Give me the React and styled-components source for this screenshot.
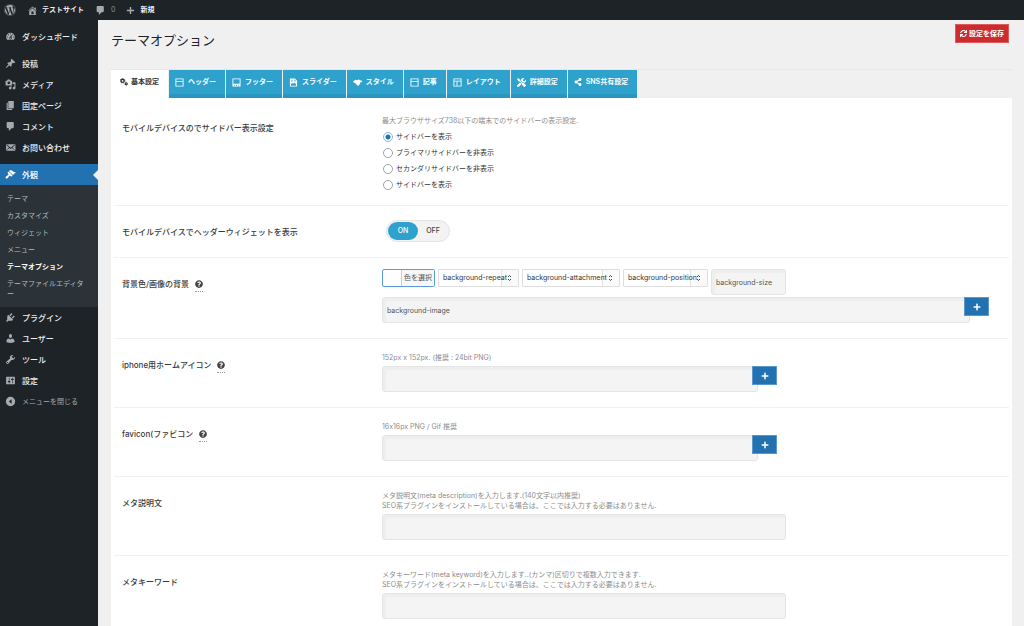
import React, { useState } from "react";
import styled, { createGlobalStyle, css } from "styled-components";
import { FaWordpress, FaSync, FaQuestionCircle, FaPlus, FaShareAlt, FaTools } from "react-icons/fa";

const GlobalStyle = createGlobalStyle`
  *, *::before, *::after { box-sizing: border-box; }
  body {
    margin: 0;
    background: #f0f0f0;
    color: #3c434a;
    font: 8px/10px Inter, "Noto Sans CJK JP", sans-serif;
    font-feature-settings: "calt" 0;
  }
  button, input, select { font: inherit; color: inherit; }
  ul { list-style: none; margin: 0; padding: 0; }
  a { color: inherit; text-decoration: none; }
  svg { display: block; flex: none; }
`;

const ICONS = {
  dashboard: "M3.76 16h12.48c1.1-1.37 1.76-3.11 1.76-5 0-4.42-3.58-8-8-8s-8 3.58-8 8c0 1.89.66 3.63 1.76 5zM10 4c.55 0 1 .45 1 1s-.45 1-1 1-1-.45-1-1 .45-1 1-1zM6 6c.55 0 1 .45 1 1s-.45 1-1 1-1-.45-1-1 .45-1 1-1zm8 0c.55 0 1 .45 1 1s-.45 1-1 1-1-.45-1-1 .45-1 1-1zm-5.37 5.55L12 7v6c0 1.1-.9 2-2 2s-2-.9-2-2c0-.57.24-1.08.63-1.45zM4 10c.55 0 1 .45 1 1s-.45 1-1 1-1-.45-1-1 .45-1 1-1zm12 0c.55 0 1 .45 1 1s-.45 1-1 1-1-.45-1-1 .45-1 1-1zm-5 3c0-.55-.45-1-1-1s-1 .45-1 1 .45 1 1 1 1-.45 1-1z",
  pin: "M10.44 3.02l1.82-1.82 6.36 6.35-1.83 1.82c-1.05-.68-2.48-.57-3.41.36l-.75.75c-.92.93-1.04 2.35-.35 3.41l-1.83 1.82-2.41-2.41-2.8 2.79c-.42.42-3.38 2.71-3.8 2.29s1.86-3.39 2.28-3.81l2.79-2.79L4.1 9.36l1.83-1.82c1.05.69 2.48.57 3.4-.36l.75-.75c.93-.92 1.05-2.35.36-3.41z",
  media: "M13 11V4c0-.55-.45-1-1-1h-1.67L9 1H5L3.67 3H2c-.55 0-1 .45-1 1v7c0 .55.45 1 1 1h10c.55 0 1-.45 1-1zM7 4.5c1.38 0 2.5 1.12 2.5 2.5S8.38 9.5 7 9.5 4.5 8.38 4.5 7 5.62 4.5 7 4.5zM14 6h5v10.5c0 1.38-1.12 2.5-2.5 2.5S14 17.88 14 16.5s1.12-2.5 2.5-2.5c.17 0 .34.02.5.05V9h-3V6zm-4 8.05V13h2v3.5c0 1.38-1.12 2.5-2.5 2.5S7 17.88 7 16.5 8.12 14 9.5 14c.17 0 .34.02.5.05z",
  page: "M6 15V2h10v13H6zm-1 1h8v2H3V5h2v11z",
  comment: "M5 2h9c1.1 0 2 .9 2 2v7c0 1.1-.9 2-2 2h-2l-5 5v-5H5c-1.1 0-2-.9-2-2V4c0-1.1.9-2 2-2z",
  email: "M19 14.5v-9c0-.83-.67-1.5-1.5-1.5H3.49c-.83 0-1.5.67-1.5 1.5v9c0 .83.67 1.5 1.5 1.5H17.5c.83 0 1.5-.67 1.5-1.5zm-1.31-9.11c.33.33.15.67-.03.84L13.6 9.95l3.9 4.06c.12.14.2.36.06.51-.13.16-.43.15-.56.05l-4.37-3.73-2.14 1.95-2.13-1.95-4.37 3.73c-.13.1-.43.11-.56-.05-.14-.15-.06-.37.06-.51l3.9-4.06-4.06-3.72c-.18-.17-.36-.51-.03-.84s.67-.17.95.07l6.24 5.04 6.25-5.04c.28-.24.62-.4.95-.07z",
  brush: "M14.48 11.06L7.41 3.99l1.5-1.5c.5-.56 2.3-.47 3.51.32 1.21.8 1.43 1.28 2.91 2.1 1.18.64 2.45 1.26 4.45.85zm-.71.71L6.7 4.7 4.93 6.47c-.39.39-.39 1.02 0 1.41l1.06 1.06c.39.39.39 1.03 0 1.42-.6.6-1.43 1.11-2.21 1.69-.35.26-.7.53-1.01.84C1.43 14.23.4 16.08 1.4 17.07c.99 1 2.84-.03 4.18-1.36.31-.31.58-.66.85-1.02.57-.78 1.08-1.61 1.69-2.21.39-.39 1.02-.39 1.41 0l1.06 1.06c.39.39 1.02.39 1.41 0z",
  plug: "M13.11 4.36L9.87 7.6 8 5.73l3.24-3.24c.35-.34 1.05-.2 1.56.32.52.51.66 1.21.31 1.55zm-8 1.77l.91-1.12 9.01 9.01-1.19.84c-.71.71-2.63 1.16-3.82 1.16H6.14L4.9 17.26c-.59.59-1.54.59-2.12 0-.59-.58-.59-1.53 0-2.12l1.24-1.24v-3.88c0-1.13.4-3.19 1.09-3.89zm7.26 3.97l3.24-3.24c.34-.35 1.04-.21 1.55.31.52.51.66 1.21.31 1.55l-3.24 3.25z",
  user: "M10 9.25c-2.27 0-2.73-3.44-2.73-3.44C7 4.02 7.82 2 9.97 2c2.16 0 2.98 2.02 2.71 3.81 0 0-.41 3.44-2.68 3.44zm0 2.57L12.72 10c2.39 0 4.52 2.33 4.52 4.53v2.49s-3.65 1.13-7.24 1.13c-3.65 0-7.24-1.13-7.24-1.13v-2.49c0-2.25 1.94-4.48 4.47-4.48z",
  wrench: "M16.68 9.77c-1.34 1.34-3.3 1.67-4.95.99l-5.41 6.52c-.99.99-2.59.99-3.58 0s-.99-2.59 0-3.57l6.52-5.42c-.68-1.65-.35-3.61.99-4.95 1.28-1.28 3.12-1.62 4.72-1.06l-2.89 2.89 2.82 2.82 2.86-2.87c.53 1.58.18 3.39-1.08 4.65zM3.81 16.21c.4.39 1.04.39 1.43 0 .4-.4.4-1.04 0-1.43-.39-.4-1.03-.4-1.43 0-.39.39-.39 1.03 0 1.43z",
  sliders: "M18 16V4c0-.55-.45-1-1-1H3c-.55 0-1 .45-1 1v12c0 .55.45 1 1 1h14c.55 0 1-.45 1-1zM8 11h1c.55 0 1 .45 1 1s-.45 1-1 1H8v1.5c0 .28-.22.5-.5.5s-.5-.22-.5-.5V13H6c-.55 0-1-.45-1-1s.45-1 1-1h1V5.5c0-.28.22-.5.5-.5s.5.22.5.5V11zm5-2h-1c-.55 0-1-.45-1-1s.45-1 1-1h1V5.5c0-.28.22-.5.5-.5s.5.22.5.5V7h1c.55 0 1 .45 1 1s-.45 1-1 1h-1v5.5c0 .28-.22.5-.5.5s-.5-.22-.5-.5V9z",
  collapse: "M10 1.5a8.5 8.5 0 1 0 0 17a8.5 8.5 0 1 0 0-17zM12 6v8l-5-4z",
  home: "M16 8.5l1.53 1.53-1.06 1.06L10 4.6l-6.47 6.49-1.06-1.06L10 2.5l4 4v-2h2v4zm-6-2.46l6 5.99V18H4v-5.97zM12 17v-5H8v5h4z",
  plus: "M8.4 2h3.2v6.4H18v3.2h-6.4V18H8.4v-6.4H2V8.4h6.4z",
  header: "M1 1h18v18H1zM3 3v3.500h14V3zM3 8.500v8.500h14v-8.500z",
  footer: "M1 1h18v18H1zM3 3v9.500h14V3zM5 15v2h2v-2zM9 15v2h2v-2zM13 15v2h2v-2z",
  slide: "M2 1h11l5 5v13H2zM4.500 13v4h11v-3l-3-4-3 3-2-2zM5 5v3h3V5zM12 3v4h4z",
  hand: "M0 8l5-4 5 1 3-2 2 2 5 1v3l-4 1-1 4-3 3-3-1-3-4-3-1z",
  layout: "M1 1h18v18H1zM3 3v3h14V3zM3 8v9h5V8zM10 8v9h7V8z",
};

function Icon({ name, size = 11 }) {
  return (
    <svg width={size} height={size} viewBox="0 0 20 20" fill="currentColor" aria-hidden="true">
      <path fillRule="evenodd" d={ICONS[name]} />
    </svg>
  );
}

function Gears() {
  return (
    <svg width="8" height="8" viewBox="0 0 20 20" fill="none" stroke="currentColor" aria-hidden="true">
      <circle cx="6.500" cy="7" r="4" strokeWidth="3.500" />
      <circle cx="6.500" cy="7" r="6" strokeWidth="1.500" strokeDasharray="2.400 2.312" />
      <circle cx="15.500" cy="14.500" r="2.500" strokeWidth="2.600" />
      <circle cx="15.500" cy="14.500" r="4" strokeWidth="1" strokeDasharray="2 2.189" />
    </svg>
  );
}

const Shell = styled.div`
  height: 100vh;
  display: flex;
  flex-direction: column;
  overflow: hidden;
`;

const AdminBar = styled.header`
  flex: none;
  height: 20px;
  background: #1d2327;
  color: #f0f0f1;
  display: flex;
  align-items: center;
  gap: 11px;
  padding: 0 4px;
`;

const BarLink = styled.a`
  display: flex;
  align-items: center;
  gap: ${(p) => p.$gap || 4}px;
  font-size: 7px;
  font-weight: 600;
  svg { color: #a7aaad; }
`;

const Count = styled.span`
  color: #8c8f94;
  font-weight: 400;
`;

const Columns = styled.div`
  flex: 1;
  min-height: 0;
  display: flex;
`;

const Sidebar = styled.nav`
  flex: none;
  width: 98px;
  padding-top: 6px;
  background: #1d2327;
  color: #f0f0f1;
`;

const MenuLink = styled.a`
  position: relative;
  display: flex;
  align-items: center;
  gap: 6px;
  height: 21px;
  padding-left: 5px;
  font-weight: 500;
  svg { color: #a7aaad; }
  ${(p) => p.$muted && css`
    color: #a7aaad;
    font-size: 7px;
    font-weight: 400;
  `}
  ${(p) => p.$current && css`
    background: #2271b1;
    color: #fff;
    svg { color: #fff; }
    &::after {
      content: "";
      position: absolute;
      right: 0;
      top: 6px;
      border: 5px solid transparent;
      border-left: 0;
      border-right-color: #f0f0f0;
    }
  `}
`;

const MenuGroup = styled.ul`
  margin-bottom: ${(p) => p.$gap || 0}px;
`;

const SubMenu = styled.ul`
  padding: 6px 10px 4px 7px;
  background: #2c3338;
`;

const SubLink = styled.a`
  display: block;
  padding: 3px 0 4px;
  font-size: 7px;
  color: ${(p) => (p.$active ? "#fff" : "#b4b9be")};
  font-weight: ${(p) => (p.$active ? 600 : 400)};
  line-break: anywhere;
`;

const Main = styled.main`
  flex: 1;
  min-width: 0;
  padding: 0 12px 0 13px;
  overflow: hidden;
`;

const TitleBar = styled.div`
  display: flex;
  justify-content: space-between;
  align-items: flex-start;
  height: 50px;
  padding: 4px 3px 0 0;
  border-bottom: 1px solid #e8e8e8;
`;

const Title = styled.h1`
  margin: 0;
  padding-top: 7px;
  font-size: 13px;
  line-height: 18px;
  font-weight: 400;
  color: #1d2327;
`;

const SaveButton = styled.button`
  display: flex;
  align-items: center;
  gap: 2px;
  height: 19px;
  padding: 0 4px;
  border: 1px solid #dc5a5a;
  background: #cd2c2e;
  color: #fff;
  font-size: 7px;
  font-weight: 600;
`;

const Tabs = styled.div`
  display: flex;
  gap: 1px;
`;

const Tab = styled.button`
  display: flex;
  align-items: center;
  gap: 4px;
  height: 28px;
  padding: 0 9px 0 6px;
  border: 0;
  border-bottom: 4px solid #2a95bf;
  background: #2ea2cc;
  color: #fff;
  font-size: 7px;
  font-weight: 600;
  white-space: nowrap;
  ${(p) => p.$active && css`
    gap: 3px;
    padding: 0 9px;
    background: #fff;
    border-color: #fff;
    color: #333;
  `}
`;

const Panel = styled.form`
  padding: 4px 3px 0;
  background: #fff;
`;

const Row = styled.div`
  display: grid;
  grid-template-columns: 260px minmax(0, 1fr);
  align-items: start;
  padding: 0 8px;
  & + & { border-top: 1px solid #f1f1f1; }
`;

const RowTitle = styled.div`
  display: flex;
  align-items: center;
  gap: 6px;
  height: 32px;
  padding-top: 20px;
  font-weight: 500;
  line-height: 12px;
  color: #3a3a3a;
`;

const Help = styled.button`
  display: flex;
  padding: 3px 0;
  border: 0;
  border-bottom: 1px dotted #999;
  background: none;
  color: #444;
`;

const Field = styled.div`
  display: flex;
  flex-direction: column;
  align-items: flex-start;
  gap: ${(p) => (p.$tight ? 2 : 3)}px;
  padding: ${(p) => (p.$tight ? 11 : 14)}px 0 15px;
`;

const Hint = styled.p`
  margin: 0;
  font-size: 7px;
  line-height: 10px;
  color: #8c8c8c;
`;

const Radios = styled.div`
  display: flex;
  flex-direction: column;
  margin: 0 0 -3px 1px;
`;

const RadioLabel = styled.label`
  display: flex;
  align-items: center;
  gap: 3px;
  height: 16px;
  font-size: 7px;
  color: #333;
`;

const Radio = styled.input`
  appearance: none;
  width: 10px;
  height: 10px;
  margin: 0;
  border: 1px solid #a0a3a8;
  border-radius: 50%;
  background: #fff;
  &:checked {
    border-color: #8fb4d8;
    background: radial-gradient(circle, #2271b1 2px, #fff 3px);
  }
`;

const Switch = styled.div`
  display: flex;
  margin-left: 4px;
  padding: 1px;
  border: 1px solid #e4e4e4;
  border-radius: 11px;
  background: #f3f3f3;
`;

const SwitchOption = styled.button`
  height: 18px;
  width: 30px;
  padding: 0;
  border: 0;
  border-radius: 9px;
  background: ${(p) => (p.$on ? "#2ea2cc" : "none")};
  color: ${(p) => (p.$on ? "#fff" : "#444")};
  font-size: 7px;
  font-weight: 500;
`;

const Controls = styled.div`
  display: flex;
  align-items: flex-start;
  gap: 3px;
`;

const ColorButton = styled.button`
  display: flex;
  height: 18px;
  padding: 0 0 0 18px;
  border: 1px solid #5b9dd9;
  border-radius: 2px;
  background: #fff;
  font-size: 7px;
`;

const ColorText = styled.span`
  padding: 0 2px;
  line-height: 16px;
  border-left: 1px solid #ccc;
  background: #f7f7f7;
  color: #555;
`;

const SelectBox = styled.div`
  position: relative;
  width: ${(p) => p.$w}px;
  height: 18px;
`;

const Select = styled.select`
  appearance: none;
  width: 100%;
  height: 18px;
  padding: 0 0 0 4px;
  border: 1px solid #dedede;
  border-radius: 1px;
  background: linear-gradient(to left, #fafafa 16px, #e2e2e2 16px, #e2e2e2 17px, #fff 17px);
  color: #32373c;
  font-size: 7px;
  line-height: 16px;
`;

const Arrows = styled.svg`
  position: absolute;
  right: 7px;
  top: 6px;
  pointer-events: none;
`;

const TextInput = styled.input`
  width: ${(p) => p.$w || "404px"};
  height: 26px;
  padding: 0 4px;
  border: 1px solid #e4e4e4;
  border-radius: 3px;
  background: #f4f4f4;
  box-shadow: inset 3px 3px 0 #eeeeee;
  font-size: 7px;
  &::placeholder { color: #555; opacity: 1; }
`;

const Upload = styled.div`
  display: flex;
  align-items: flex-start;
  width: 100%;
`;

const AddButton = styled.button`
  flex: none;
  display: flex;
  align-items: center;
  justify-content: center;
  width: 25px;
  height: 19px;
  margin-left: -6px;
  padding: 0;
  border: 1px solid #5b97c9;
  background: #2271b1;
  color: #fff;
`;

const TABS = [
  ["基本設定", <Gears />],
  ["ヘッダー", <Icon name="header" size={9} />],
  ["フッター", <Icon name="footer" size={9} />],
  ["スライダー", <Icon name="slide" size={9} />],
  ["スタイル", <Icon name="hand" size={9} />],
  ["記事", <Icon name="header" size={9} />],
  ["レイアウト", <Icon name="layout" size={9} />],
  ["詳細設定", <FaTools size={9} />],
  ["SNS共有設定", <FaShareAlt size={8} />],
];

const MENU_TOP = [
  ["pin", "投稿"],
  ["media", "メディア"],
  ["page", "固定ページ"],
  ["comment", "コメント"],
  ["email", "お問い合わせ"],
];
const SUBMENU = ["テーマ", "カスタマイズ", "ウィジェット", "メニュー", "テーマオプション", "テーマファイルエディター"];
const MENU_BOTTOM = [
  ["plug", "プラグイン"],
  ["user", "ユーザー"],
  ["wrench", "ツール"],
  ["sliders", "設定"],
  ["collapse", "メニューを閉じる"],
];
const SIDEBAR_CHOICES = ["サイドバーを表示", "プライマリサイドバーを非表示", "セカンダリサイドバーを非表示", "サイドバーを表示"];
const BG_SELECTS = [["background-repeat", 81], ["background-attachment", 98], ["background-position", 85]];

function MenuItems({ items, gap }) {
  return (
    <MenuGroup $gap={gap}>
      {items.map(([icon, text]) => (
        <li key={text}>
          <MenuLink href="#" $muted={icon === "collapse"}><Icon name={icon} />{text}</MenuLink>
        </li>
      ))}
    </MenuGroup>
  );
}

function OptionRow({ title, id, help, tight, children }) {
  return (
    <Row>
      <RowTitle>
        {id ? <label htmlFor={id}>{title}</label> : <span>{title}</span>}
        {help && <Help type="button" aria-label="ヘルプ"><FaQuestionCircle size={8} /></Help>}
      </RowTitle>
      <Field $tight={tight}>{children}</Field>
    </Row>
  );
}

function BackgroundSelect({ name, width }) {
  return (
    <SelectBox $w={width}>
      <Select aria-label={name}><option>{name}</option></Select>
      <Arrows width="5" height="6" viewBox="0 0 5 6" fill="none" stroke="#444"><path d="M1 2L2.500 0.500L4 2M1 4L2.500 5.500L4 4" /></Arrows>
    </SelectBox>
  );
}

export default function App() {
  const [choice, setChoice] = useState(0);
  const [on, setOn] = useState(true);
  const [tab, setTab] = useState(0);
  return (
    <Shell>
      <GlobalStyle />
      <AdminBar>
        <BarLink href="#" aria-label="WordPress"><FaWordpress size={12} /></BarLink>
        <BarLink href="#"><Icon name="home" />テストサイト</BarLink>
        <BarLink href="#" $gap={5}><Icon name="comment" /><Count>0</Count></BarLink>
        <BarLink href="#" $gap={5}><Icon name="plus" size={9} />新規</BarLink>
      </AdminBar>
      <Columns>
        <Sidebar>
          <MenuItems items={[["dashboard", "ダッシュボード"]]} gap={6} />
          <MenuItems items={MENU_TOP} gap={6} />
          <MenuLink href="#" $current><Icon name="brush" />外観</MenuLink>
          <SubMenu>
            {SUBMENU.map((text, i) => (
              <li key={text}><SubLink href="#" $active={i === 4}>{text}</SubLink></li>
            ))}
          </SubMenu>
          <MenuItems items={MENU_BOTTOM} />
        </Sidebar>
        <Main>
          <TitleBar>
            <Title>テーマオプション</Title>
            <SaveButton type="submit" form="options"><FaSync size={7} />設定を保存</SaveButton>
          </TitleBar>
          <Tabs>
            {TABS.map(([text, icon], i) => (
              <Tab key={text} type="button" $active={i === tab} onClick={() => setTab(i)}>{icon}{text}</Tab>
            ))}
          </Tabs>
          <Panel id="options" onSubmit={(e) => e.preventDefault()}>
            <OptionRow title="モバイルデバイスのでサイドバー表示設定">
              <Hint>最大ブラウザサイズ738以下の端末でのサイドバーの表示設定.</Hint>
              <Radios>
                {SIDEBAR_CHOICES.map((text, i) => (
                  <RadioLabel key={i}>
                    <Radio type="radio" name="mobile-sidebar" checked={choice === i} onChange={() => setChoice(i)} />
                    {text}
                  </RadioLabel>
                ))}
              </Radios>
            </OptionRow>
            <OptionRow title="モバイルデバイスでヘッダーウィジェットを表示">
              <Switch>
                <SwitchOption type="button" $on={on} onClick={() => setOn(true)}>ON</SwitchOption>
                <SwitchOption type="button" $on={!on} onClick={() => setOn(false)}>OFF</SwitchOption>
              </Switch>
            </OptionRow>
            <OptionRow title="背景色/画像の背景" help tight>
              <Controls>
                <ColorButton type="button"><ColorText>色を選択</ColorText></ColorButton>
                {BG_SELECTS.map(([name, width]) => <BackgroundSelect key={name} name={name} width={width} />)}
                <TextInput $w="75px" aria-label="background-size" placeholder="background-size" />
              </Controls>
              <Upload>
                <TextInput $w="95%" aria-label="background-image" placeholder="background-image" />
                <AddButton type="button" aria-label="画像を追加"><FaPlus size={8} /></AddButton>
              </Upload>
            </OptionRow>
            <OptionRow title="iphone用ホームアイコン" id="home-icon" help>
              <Hint>152px x 152px. (推奨 : 24bit PNG)</Hint>
              <Upload>
                <TextInput $w="376px" id="home-icon" />
                <AddButton type="button" aria-label="画像を追加"><FaPlus size={8} /></AddButton>
              </Upload>
            </OptionRow>
            <OptionRow title="favicon(ファビコン" id="favicon" help>
              <Hint>16x16px PNG / Gif 推奨</Hint>
              <Upload>
                <TextInput $w="376px" id="favicon" />
                <AddButton type="button" aria-label="画像を追加"><FaPlus size={8} /></AddButton>
              </Upload>
            </OptionRow>
            <OptionRow title="メタ説明文" id="meta-description">
              <Hint>メタ説明文(meta description)を入力します.(140文字以内推奨)<br />SEO系プラグインをインストールしている場合は、ここでは入力する必要はありません.</Hint>
              <TextInput id="meta-description" />
            </OptionRow>
            <OptionRow title="メタキーワード" id="meta-keyword">
              <Hint>メタキーワード(meta keyword)を入力します..(カンマ)区切りで複数入力できます.<br />SEO系プラグインをインストールしている場合は、ここでは入力する必要はありません.</Hint>
              <TextInput id="meta-keyword" />
            </OptionRow>
          </Panel>
        </Main>
      </Columns>
    </Shell>
  );
}
